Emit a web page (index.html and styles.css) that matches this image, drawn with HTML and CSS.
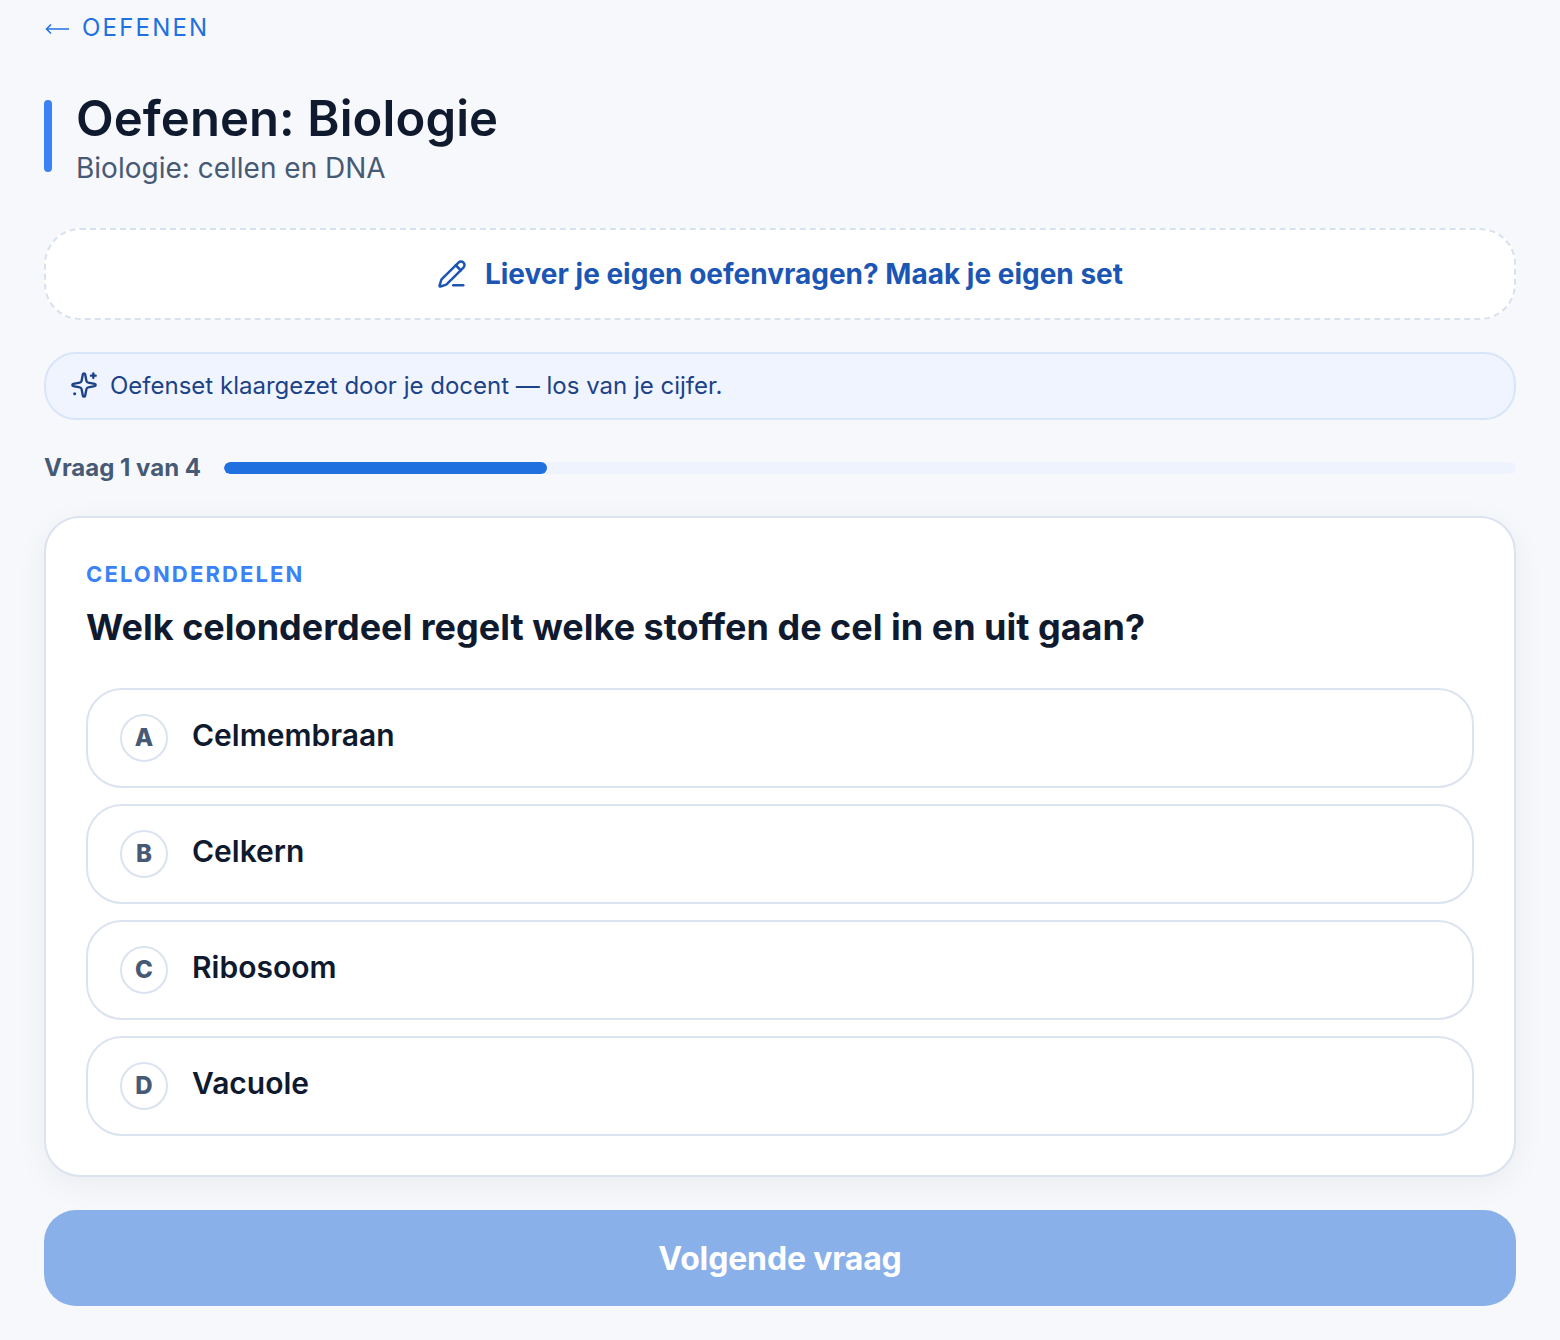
FILE: index.html
```html
<!DOCTYPE html>
<html lang="nl">
<head>
<meta charset="utf-8">
<title>Oefenen: Biologie</title>
<link rel="stylesheet" href="styles.css">
</head>
<body>
<main class="page">
  <a class="back" href="#">
    <svg class="back-arrow" viewBox="0 0 24 12" fill="none" stroke="currentColor" stroke-width="1.500"><path d="M24 6H1.500"/><path d="M6 1.500 1.500 6 6 10.500"/></svg>
    <span>OEFENEN</span>
  </a>
  <header class="head">
    <div class="head-bar"></div>
    <div class="head-text">
      <h1 class="title">Oefenen: Biologie</h1>
      <p class="subtitle">Biologie: cellen en DNA</p>
    </div>
  </header>
  <a class="own-set" href="#">
    <svg class="own-icon" viewBox="0 0 24 24" fill="none" stroke="currentColor" stroke-width="2" stroke-linecap="round" stroke-linejoin="round"><path d="M13 21h8"/><path d="m15 5 4 4"/><path d="M21.174 6.812a1 1 0 0 0-3.986-3.987L3.842 16.174a2 2 0 0 0-.5.83l-1.321 4.352a.5.5 0 0 0 .623.622l4.353-1.32a2 2 0 0 0 .83-.497z"/></svg>
    <span>Liever je eigen oefenvragen? Maak je eigen set</span>
  </a>
  <div class="notice">
    <svg class="notice-icon" viewBox="0 0 24 24" fill="none" stroke="currentColor" stroke-width="2" stroke-linecap="round" stroke-linejoin="round"><path d="M11.017 2.814a1 1 0 0 1 1.966 0l1.051 5.558a2 2 0 0 0 1.594 1.594l5.558 1.051a1 1 0 0 1 0 1.966l-5.558 1.051a2 2 0 0 0-1.594 1.594l-1.051 5.558a1 1 0 0 1-1.966 0l-1.051-5.558a2 2 0 0 0-1.594-1.594l-5.558-1.051a1 1 0 0 1 0-1.966l5.558-1.051a2 2 0 0 0 1.594-1.594z"/><path d="M20 2v4"/><path d="M22 4h-4"/><path d="M4 19.500h.01" stroke-width="2.600"/></svg>
    <span>Oefenset klaargezet door je docent — los van je cijfer.</span>
  </div>
  <div class="progress">
    <span class="progress-label">Vraag 1 van 4</span>
    <div class="progress-track"><div class="progress-fill" style="width:25%"></div></div>
  </div>
  <section class="card">
    <div class="topic">CELONDERDELEN</div>
    <h2 class="question">Welk celonderdeel regelt welke stoffen de cel in en uit gaan?</h2>
    <div class="options">
      <button class="option"><span class="letter">A</span><span class="answer">Celmembraan</span></button>
      <button class="option"><span class="letter">B</span><span class="answer">Celkern</span></button>
      <button class="option"><span class="letter">C</span><span class="answer">Ribosoom</span></button>
      <button class="option"><span class="letter">D</span><span class="answer">Vacuole</span></button>
    </div>
  </section>
  <button class="next">Volgende vraag</button>
</main>
</body>
</html>
```
FILE: styles.css
```css
* { box-sizing: border-box; }
html, body { margin: 0; padding: 0; }
body { background: #f7f8fb; font-family: Inter, "Liberation Sans", sans-serif; color: #0f1a2e; }
.page { padding: 12px 44px 34px; display: flex; flex-direction: column; }
.back { display: flex; align-items: center; gap: 13px; height: 32px; line-height: 32px; font-size: 24px; letter-spacing: 2.2px; color: #2170e0; text-decoration: none; font-weight: 400; }
.back-arrow { width: 24px; height: 12px; flex: none; margin-left: 1px; position: relative; top: 1px; }
.head { display: flex; gap: 24px; margin-top: 44px; align-items: flex-start; }
.head-bar { width: 8px; height: 72px; margin-top: 12px; border-radius: 4px; background: #3b82f6; }
.head-text { padding-top: 3px; }
.title { margin: 0; font-size: 49px; line-height: 56px; font-weight: 600; letter-spacing: 0.1px; color: #0f1a2e; }
.subtitle { margin: 3px 0 0; font-size: 28px; line-height: 36px; color: #475a75; }
.own-set { margin-top: 42px; height: 92px; display: flex; align-items: center; justify-content: center; gap: 18px; background: #fff; border: 2px dashed #d8e1ef; border-radius: 36px; color: #1c56b4; font-size: 28px; font-weight: 700; text-decoration: none; }
.own-icon { width: 30px; height: 30px; flex: none; }
.notice { margin-top: 32px; height: 68px; display: flex; align-items: center; gap: 12px; padding: 0 24px 2px; background: #f0f4fe; border: 2px solid #d9e5f9; border-radius: 32px; color: #1c4288; font-size: 24px; }
.notice-icon { width: 28px; height: 28px; flex: none; }
.progress { margin-top: 32px; display: flex; align-items: center; gap: 23px; height: 32px; }
.progress-label { font-size: 24px; font-weight: 700; color: #475a75; position: relative; top: -1px; }
.progress-track { flex: 1; height: 12px; border-radius: 6px; background: #eff3fd; overflow: hidden; }
.progress-fill { height: 100%; border-radius: 6px; background: #2170e0; }
.card { margin-top: 32px; padding: 40px; height: 661px; background: #fff; border: 2px solid #dbe3f0; border-radius: 36px; box-shadow: 0 8px 32px rgba(15, 26, 46, 0.05); }
.topic { font-size: 22px; line-height: 32px; font-weight: 700; letter-spacing: 2.14px; color: #3b82f6; }
.question { margin: 13px 0 0; font-size: 36px; line-height: 48px; font-weight: 700; color: #0f1a2e; }
.options { margin-top: 37px; display: flex; flex-direction: column; gap: 16px; }
.option { height: 100px; display: flex; align-items: center; gap: 24px; padding: 0 32px; background: #fff; border: 2px solid #dbe3f0; border-radius: 36px; font-family: inherit; text-align: left; cursor: pointer; }
.letter { width: 48px; height: 48px; flex: none; display: flex; align-items: center; justify-content: center; padding-bottom: 2px; border: 2px solid #dbe3f0; border-radius: 50%; font-size: 24px; font-weight: 800; color: #475a75; }
.answer { font-size: 30px; font-weight: 600; color: #0f1a2e; position: relative; top: -3px; }
.next { margin-top: 33px; height: 96px; border: 0; border-radius: 32px; background: #8ab0e9; color: #fff; font-family: inherit; font-size: 32px; font-weight: 700; letter-spacing: -0.15px; }
```
